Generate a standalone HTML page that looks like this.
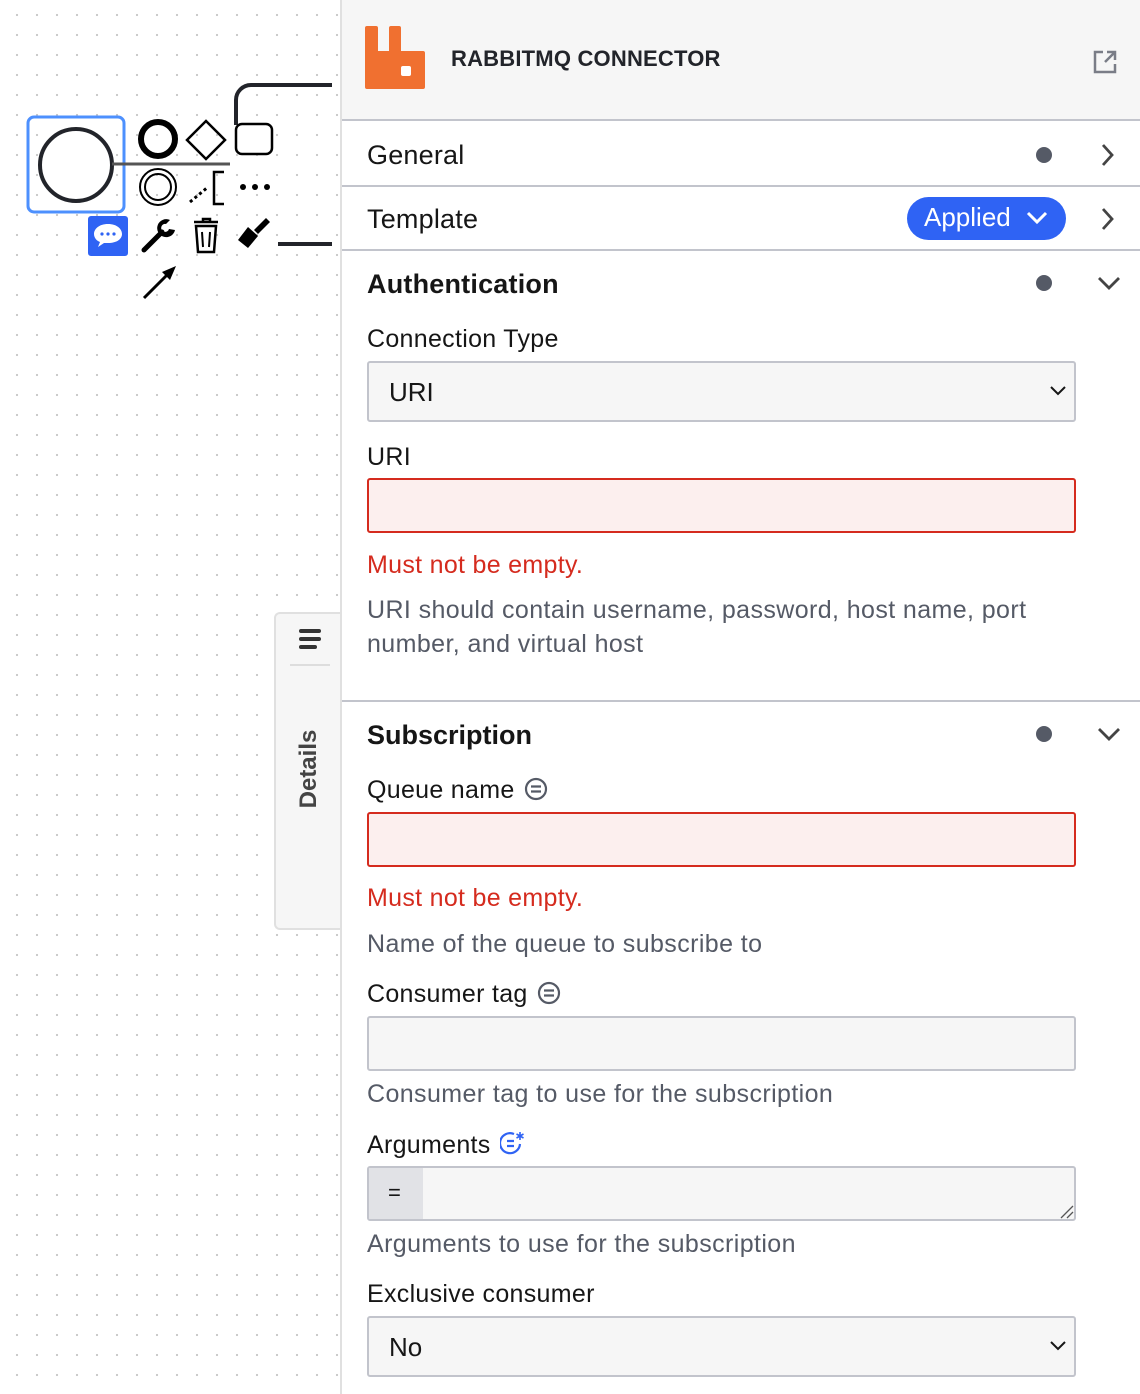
<!DOCTYPE html>
<html><head><meta charset="utf-8"><style>
*{box-sizing:border-box;margin:0;padding:0}
body{width:1140px;height:1394px;position:relative;overflow:hidden;font-family:"Liberation Sans",sans-serif;color:#161616;background:#fff}
.canvas{position:absolute;left:0;top:0;width:340px;height:1394px;background-image:radial-gradient(circle,#c8c8c8 1px,transparent 1.3px);background-size:20px 20px;background-position:7px 5px}
.panel{position:absolute;left:340px;top:0;width:800px;height:1394px;background:#fff;border-left:2px solid #e0e0e0}
.hdr{position:absolute;left:0;top:0;width:800px;height:121px;background:#f6f6f6;border-bottom:2px solid #c2c4cc}
.a{position:absolute}
.row{position:absolute;left:0;width:800px;border-bottom:2px solid #c2c4cc}
.t{position:absolute;font-size:27px;white-space:nowrap;letter-spacing:0.2px}
.lab{position:absolute;left:25px;font-size:25px;white-space:nowrap;color:#161616;letter-spacing:0.3px}
.help{position:absolute;left:25px;font-size:25px;color:#555a66;line-height:34px;letter-spacing:0.4px}
.err{position:absolute;left:25px;font-size:25px;color:#d52b1e;letter-spacing:0.3px}
.inp{position:absolute;left:25px;width:709px;height:55px;border:2px solid #c2c4cc;border-radius:3px;background:#f6f6f6}
.inp.bad{border-color:#d52b1e;background:#fcefee}
.dot{position:absolute;width:16px;height:16px;border-radius:50%;background:#555a66}
</style></head><body>
<div class="canvas"></div>
<svg class="a" style="left:0;top:60px" width="340" height="260" viewBox="0 60 340 260">
<path d="M236 125 V100 a15 15 0 0 1 15 -15 H332" fill="none" stroke="#22242a" stroke-width="4"/>
<path d="M278 244 H332" stroke="#22242a" stroke-width="4"/>
<rect x="28" y="117" width="96" height="95" rx="6" fill="none" stroke="#4d90fe" stroke-width="3"/>
<circle cx="76" cy="165" r="36" fill="#fff" stroke="#22242a" stroke-width="4"/>
<path d="M112 164 H230" stroke="#555" stroke-width="3"/>
<circle cx="158" cy="139" r="17" fill="none" stroke="#000" stroke-width="6"/>
<path d="M206 121 L225 140 L206 159 L187 140Z" fill="none" stroke="#000" stroke-width="2.5"/>
<rect x="236" y="124" width="36" height="30" rx="6" fill="#fff" stroke="#000" stroke-width="2.5"/>
<circle cx="158" cy="187" r="18" fill="none" stroke="#000" stroke-width="2"/>
<circle cx="158" cy="187" r="13" fill="none" stroke="#000" stroke-width="2"/>
<path d="M190 202 L208 187" stroke="#000" stroke-width="3" stroke-dasharray="3 3"/>
<path d="M224 172 H214 V204 H224" fill="none" stroke="#000" stroke-width="2.5"/>
<circle cx="243" cy="187" r="3" fill="#000"/><circle cx="255" cy="187" r="3" fill="#000"/><circle cx="267" cy="187" r="3" fill="#000"/>
<rect x="88" y="216" width="40" height="40" rx="3" fill="#2f63f4"/>
<path d="M108 224 c-9 0 -14 5 -14 10 c0 4 3 7 6 8 l-2 5 l6 -4 c1 0 3 0 4 0 c9 0 14 -4 14 -9 c0 -5 -5 -10 -14 -10z" fill="#fff"/>
<circle cx="102" cy="234" r="1.6" fill="#2f63f4"/><circle cx="108" cy="234" r="1.6" fill="#2f63f4"/><circle cx="114" cy="234" r="1.6" fill="#2f63f4"/>
<path d="M144 250 L162 232" stroke="#000" stroke-width="5" stroke-linecap="round"/>
<path d="M170 220 a9 9 0 1 0 5 10 l-6 -1 a4 4 0 1 1 -3 -5z" fill="#000"/>
<path d="M194 222 H218 M203 222 V219 H210 V222" stroke="#000" stroke-width="2.5" fill="none"/>
<path d="M196 226 L198 252 H214 L216 226Z" fill="none" stroke="#000" stroke-width="2.5"/>
<path d="M202 232 L203 247 M210 232 L209 247" stroke="#000" stroke-width="2"/>
<path d="M238 240 L248 248 L258 236 L248 227Z" fill="#000"/>
<path d="M254 230 L266 218 L270 222 L258 234Z" fill="#000"/>
<path d="M144 298 L170 272" stroke="#000" stroke-width="3"/>
<path d="M176 266 L162 272 L170 280Z" fill="#000"/>
</svg>
<div class="a" style="left:274px;top:612px;width:70px;height:318px;background:#f6f6f6;border:2px solid #e0e0e0;border-right:none;border-radius:6px 0 0 6px"></div>
<div class="a" style="left:299px;top:629px;width:22px;height:4px;background:#333;border-radius:2px"></div>
<div class="a" style="left:299px;top:637px;width:22px;height:4px;background:#333;border-radius:2px"></div>
<div class="a" style="left:299px;top:645px;width:18px;height:4px;background:#333;border-radius:2px"></div>
<div class="a" style="left:290px;top:664px;width:40px;height:2px;background:#ddd"></div>
<div class="a" style="left:263px;top:754px;width:94px;height:30px;transform:rotate(-90deg);font-size:24px;font-weight:bold;color:#444;text-align:center">Details</div>

<div class="panel">
<div class="hdr">
<svg class="a" style="left:21px;top:25px" width="64" height="66" viewBox="0 0 64 66"><path d="M2 3 a2 2 0 0 1 2 -2 H13 a2 2 0 0 1 2 2 V26 H26 V3 a2 2 0 0 1 2 -2 H36 a2 2 0 0 1 2 2 V26 H60 a2 2 0 0 1 2 2 V62 a2 2 0 0 1 -2 2 H4 a2 2 0 0 1 -2 -2Z" fill="#f07030"/><rect x="38" y="41" width="10" height="10" rx="2" fill="#fff"/></svg>
<div class="t" style="left:109px;top:46px;font-size:22px;font-weight:bold;color:#22242a;letter-spacing:0.2px">RABBITMQ CONNECTOR</div>
<svg class="a" style="left:749px;top:48px" width="28" height="28" viewBox="0 0 28 28" fill="none" stroke="#7a7d87" stroke-width="2.5"><path d="M12 4 H4 V24 H24 V16"/><path d="M14 14 L24 4 M16 4 H24 V12"/></svg>
</div>
<div class="row" style="top:123px;height:64px"><div class="t" style="left:25px;top:17px">General</div><div class="dot" style="left:694px;top:24px"></div><svg class="a" style="left:758px;top:20px" width="16" height="24" viewBox="0 0 16 24"><path d="M3 2 L12 12 L3 22" fill="none" stroke="#444" stroke-width="2.8"/></svg></div>
<div class="row" style="top:187px;height:64px"><div class="t" style="left:25px;top:17px">Template</div>
<div class="a" style="left:565px;top:10px;width:159px;height:43px;border-radius:22px;background:#2f63f4;color:#fff;font-size:26px;padding:5px 0 0 17px">Applied</div>
<svg class="a" style="left:684px;top:23px" width="22" height="16" viewBox="0 0 22 16"><path d="M2 3 L11 12 L20 3" fill="none" stroke="#fff" stroke-width="3"/></svg>
<svg class="a" style="left:758px;top:20px" width="16" height="24" viewBox="0 0 16 24"><path d="M3 2 L12 12 L3 22" fill="none" stroke="#444" stroke-width="2.8"/></svg></div>
<div class="row" style="top:251px;height:451px">
<div class="t" style="left:25px;top:18px;font-weight:bold">Authentication</div>
<div class="dot" style="left:694px;top:24px"></div>
<svg class="a" style="left:755px;top:24px" width="24" height="16" viewBox="0 0 24 16"><path d="M2 3 L12 13 L22 3" fill="none" stroke="#444" stroke-width="2.8"/></svg>
<div class="lab" style="top:74px">Connection Type</div>
<div class="inp" style="top:110px;height:61px"><div class="a" style="left:20px;top:14px;font-size:26px">URI</div><svg class="a" style="left:680px;top:22px" width="18" height="12" viewBox="0 0 18 12"><path d="M2 2 L9 9 L16 2" fill="none" stroke="#161616" stroke-width="2"/></svg></div>
<div class="lab" style="top:192px">URI</div>
<div class="inp bad" style="top:227px"></div>
<div class="err" style="top:300px">Must not be empty.</div>
<div class="help" style="top:342px;width:690px">URI should contain username, password, host name, port number, and virtual host</div>
</div>
<div class="a" style="left:25px;top:720px;font-size:27px;font-weight:bold">Subscription</div>
<div class="dot" style="left:694px;top:726px"></div>
<svg class="a" style="left:755px;top:726px" width="24" height="16" viewBox="0 0 24 16"><path d="M2 3 L12 13 L22 3" fill="none" stroke="#444" stroke-width="2.8"/></svg>
<div class="lab" style="top:776px">Queue name <svg style="vertical-align:-3px;margin-left:2px" width="24" height="24" viewBox="0 0 24 24" fill="none" stroke="#555a66" stroke-width="2.2"><circle cx="12" cy="12" r="10"/><path d="M7 9.5 H17 M7 14.5 H17"/></svg></div>
<div class="inp bad" style="top:812px"></div>
<div class="err" style="top:884px">Must not be empty.</div>
<div class="help" style="top:927px">Name of the queue to subscribe to</div>
<div class="lab" style="top:980px">Consumer tag <svg style="vertical-align:-3px;margin-left:2px" width="24" height="24" viewBox="0 0 24 24" fill="none" stroke="#555a66" stroke-width="2.2"><circle cx="12" cy="12" r="10"/><path d="M7 9.5 H17 M7 14.5 H17"/></svg></div>
<div class="inp" style="top:1016px"></div>
<div class="help" style="top:1077px">Consumer tag to use for the subscription</div>
<div class="lab" style="top:1130px">Arguments <svg style="vertical-align:-3px;margin-left:2px" width="26" height="26" viewBox="0 0 26 26" fill="none" stroke="#2f63f4" stroke-width="2.2"><path d="M20 14 A10 10 0 1 1 14 4"/><path d="M7 11 H14 M7 16 H14"/><path d="M20 2 V10 M16.5 4 L23.5 8 M23.5 4 L16.5 8" stroke-width="1.6"/></svg></div>
<div class="inp" style="top:1166px;overflow:hidden"><div class="a" style="left:0;top:0;width:54px;height:53px;background:#e1e2e6;font-size:22px;padding:12px 0 0 19px">=</div><svg class="a" style="left:691px;top:37px" width="14" height="14" viewBox="0 0 14 14"><path d="M1 13 L13 1 M7 13 L13 7" stroke="#555" stroke-width="1.3"/></svg></div>
<div class="help" style="top:1227px">Arguments to use for the subscription</div>
<div class="lab" style="top:1280px">Exclusive consumer</div>
<div class="inp" style="top:1316px;height:61px"><div class="a" style="left:20px;top:14px;font-size:26px">No</div><svg class="a" style="left:680px;top:22px" width="18" height="12" viewBox="0 0 18 12"><path d="M2 2 L9 9 L16 2" fill="none" stroke="#161616" stroke-width="2"/></svg></div>
</div>
</body></html>
